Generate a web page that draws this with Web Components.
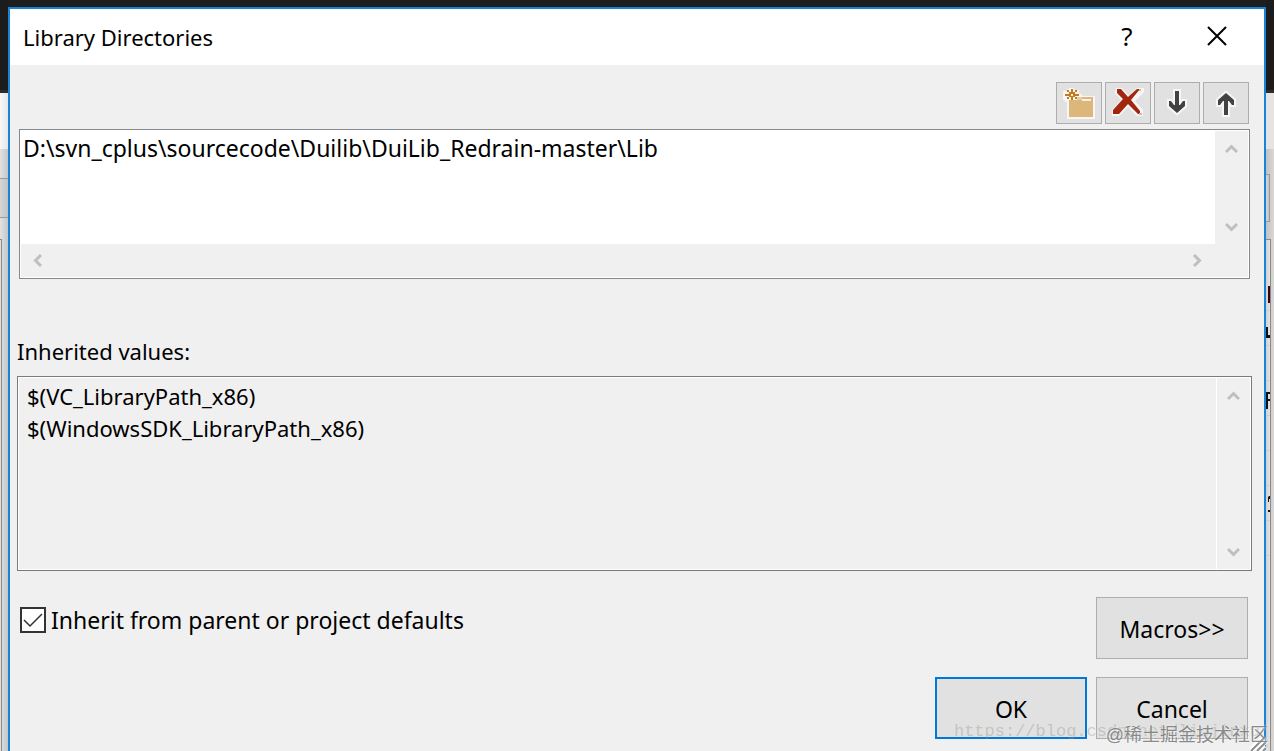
<!DOCTYPE html>
<html lang="en">
  <head>
    <meta charset="utf-8" />
    <title>Library Directories</title>
    <style>
      body {
        margin: 0;
        height: 100vh;
        overflow: hidden;
        background: #1e1e1e;
        color: #000;
        font: 22px/32px 'Noto Sans', 'Open Sans', sans-serif;
      }
    </style>
  </head>
  <body>
    <template id="desktopTemplate">
      <style>
        :host {
          display: grid;
          grid-template-columns: 8px 1fr 8px;
          height: 100vh;
          position: relative;
          overflow: hidden;
        }
        main {
          padding-top: 7px;
          min-width: 0;
        }
      </style>
      <page-edge side="left"></page-edge>
      <main><slot></slot></main>
      <page-edge side="right"></page-edge>
      <slot name="mark"></slot>
    </template>

    <template id="edgeTemplate">
      <style>
        :host {
          display: flex;
          flex-direction: column;
          overflow: hidden;
          background: linear-gradient(to right, #e2e2e2, #c6c6c6);
        }
        :host([side='right']) {
          background: linear-gradient(to left, #d8d8d8, #c2c2c2);
        }
        .dark {
          flex: 0 0 90px;
          background: #1c1c1c;
          border-bottom: 3px solid #2c2c2c;
        }
        .light {
          flex: 0 0 56px;
          background: linear-gradient(to right, #f8f8f8, #e6e6e6);
        }
        :host([side='right']) .light {
          background: #e4e4e4;
        }
        .field {
          flex: 0 0 38px;
          margin: 29px 0 21px;
          border: 1px solid #9a9a9a;
          border-left: 0;
          background: linear-gradient(to right, #d6d6d6, #c2c2c2);
        }
        :host([side='left']) .field {
          border-right: 0;
        }
        :host([side='right']) .field {
          margin: 25px 4px 17px 0;
          flex-basis: 46px;
        }
        .list {
          flex: 1;
          border-top: 1px solid #8a8a8a;
          border-right: 1px solid #8a8a8a;
          overflow: hidden;
        }
        :host([side='left']) .list {
          margin-right: 6px;
        }
        :host([side='right']) .list {
          margin-right: 3px;
          padding-top: 36px;
          background: linear-gradient(to right, #d0d0d0, #e4e4e4);
        }
        .list i {
          display: block;
          height: 34px;
          border-bottom: 1px solid #cdcdcd;
        }
        /* slivers of the property names under the dialog */
        svg {
          display: block;
          width: 4px;
          height: 34px;
        }
      </style>
      <div class="dark"></div>
      <div class="light"></div>
      <div class="field"></div>
      <div class="list"></div>
    </template>

    <template id="dialogTemplate">
      <style>
        :host {
          display: block;
          box-sizing: border-box;
          min-height: 100vh;
          border: 2px solid #1883d7;
          background: #f0f0f0;
        }
        header {
          display: flex;
          align-items: center;
          height: 56px;
          padding: 0 2px 0 13px;
          background: #fff;
        }
        h1 {
          flex: 1;
          margin: 0;
          font: inherit;
        }
        header button {
          width: 90px;
          height: 56px;
          padding: 0 0 2px;
          border: 0;
          background: none;
          font: inherit;
          font-size: 26px;
          color: #000;
        }
        svg {
          display: block;
          margin: auto;
        }
        .content {
          padding: 17px 12px 0 7px;
        }
      </style>
      <header>
        <h1><slot name="title"></slot></h1>
        <button type="button" aria-label="Help">?</button>
        <button type="button" aria-label="Close">
          <svg width="20" height="20" viewBox="0 0 20 20">
            <path d="M1 1L19 19M19 1L1 19" stroke="#000" stroke-width="2" />
          </svg>
        </button>
      </header>
      <div class="content"><slot></slot></div>
    </template>

    <template id="toolTemplate">
      <style>
        :host {
          display: block;
        }
        button {
          display: block;
          box-sizing: border-box;
          width: 46px;
          height: 42px;
          padding: 0;
          border: 1px solid #adadad;
          background: #e1e1e1;
        }
        svg {
          display: block;
          margin: -1px;
        }
      </style>
      <button type="button"></button>
    </template>

    <template id="boxTemplate">
      <style>
        :host {
          display: block;
        }
        label {
          display: block;
          margin-bottom: 9px;
        }
        .frame {
          display: grid;
          grid-template-columns: 1fr 33px;
          box-sizing: border-box;
          height: 195px;
          padding: 1px;
          border: 1px solid #7a7a7a;
          background: #f0f0f0;
          box-shadow: inset 0 0 0 1px #fff;
        }
        textarea {
          box-sizing: border-box;
          width: 100%;
          height: 100%;
          min-width: 0;
          margin: 0;
          padding: 2px 8px;
          border: 0;
          border-right: 1px solid #fff;
          outline: 0;
          resize: none;
          overflow: hidden;
          white-space: pre;
          background: none;
          font: inherit;
          color: inherit;
        }
        .bar {
          display: flex;
          flex-direction: column;
          justify-content: space-between;
          align-items: center;
          padding: 13px 0 12px;
        }
        .bar.across {
          display: none;
          flex-direction: row;
          padding: 0 13px 0 12px;
        }
        :host([editable]) .frame {
          grid-template-rows: 1fr 33px;
          height: 150px;
          border-color: #828790;
        }
        :host([editable]) textarea {
          padding: 1px 2px;
          border: 0;
          background: #fff;
          font-size: 23px;
        }
        :host([editable]) .bar.across {
          display: flex;
        }
        path {
          fill: none;
          stroke: #bfbfbf;
          stroke-width: 3;
        }
      </style>
      <label for="text"></label>
      <div class="frame">
        <textarea id="text" spellcheck="false"></textarea>
        <div class="bar">
          <svg width="13" height="10"><path d="M1 8L6.500 2.500L12 8" /></svg>
          <svg width="13" height="10"><path d="M1 2L6.500 7.500L12 2" /></svg>
        </div>
        <div class="bar across">
          <svg width="10" height="13"><path d="M8 1L2.500 6.500L8 12" /></svg>
          <svg width="10" height="13"><path d="M2 1L7.500 6.500L2 12" /></svg>
        </div>
      </div>
    </template>

    <template id="checkTemplate">
      <style>
        :host {
          display: block;
          font-size: 23px;
        }
        label {
          display: flex;
          align-items: center;
          gap: 5px;
        }
        input {
          appearance: none;
          flex: none;
          box-sizing: border-box;
          width: 26px;
          height: 26px;
          margin: 0;
          border: 2px solid #333;
          background: #fff;
        }
        .box {
          display: grid;
        }
        .box > * {
          grid-area: 1 / 1;
        }
        svg {
          pointer-events: none;
        }
        input:not(:checked) + svg {
          display: none;
        }
      </style>
      <label>
        <span class="box">
          <input type="checkbox" checked />
          <svg width="26" height="26">
            <path d="M4 13L10 19L22 7" fill="none" stroke="#333" stroke-width="1.500" />
          </svg>
        </span>
        <slot></slot>
      </label>
    </template>

    <template id="buttonTemplate">
      <style>
        :host {
          display: block;
          font-size: 23px;
        }
        button {
          display: block;
          box-sizing: border-box;
          width: 152px;
          height: 62px;
          padding: 2px 0 0;
          border: 1px solid #adadad;
          background: #e1e1e1;
          font: inherit;
          color: inherit;
        }
        :host([primary]) button {
          border: 2px solid #0078d7;
        }
      </style>
      <button type="button"><slot></slot></button>
    </template>

    <template id="editorTemplate">
      <style>
        :host {
          display: flex;
          flex-direction: column;
        }
        .tools {
          display: flex;
          justify-content: flex-end;
          gap: 3px;
          padding: 0 3px 5px 0;
        }
        .paths {
          margin: 0 2px 56px;
        }
        footer {
          display: flex;
          justify-content: space-between;
          align-items: flex-start;
          padding: 26px 4px 12px 3px;
        }
        check-option {
          padding-top: 7px;
        }
        .actions {
          display: grid;
          grid-template-columns: auto auto;
          justify-items: end;
          gap: 18px 9px;
        }
        .actions ::slotted([wide]) {
          grid-column: 1 / -1;
        }
      </style>
      <div class="tools"><slot name="tool"></slot></div>
      <div class="paths"><slot name="paths"></slot></div>
      <slot name="inherited"></slot>
      <footer>
        <check-option><slot name="option"></slot></check-option>
        <div class="actions"><slot name="action"></slot></div>
      </footer>
    </template>

    <template id="markTemplate">
      <style>
        :host {
          position: absolute;
          right: 6px;
          bottom: 0;
          display: grid;
          justify-items: end;
          align-items: end;
          pointer-events: none;
        }
        :host > * {
          grid-area: 1 / 1;
        }
        .link {
          padding-right: 8px;
          font: 17px/38px 'Liberation Mono', monospace;
          color: rgba(150, 150, 140, 0.4);
        }
        .site {
          font: 18px/32px 'Liberation Sans', 'Noto Sans CJK SC', sans-serif;
          color: rgba(100, 100, 100, 0.75);
          text-shadow: 0 0 2px #fff;
        }
        svg,
        .link,
        .site {
          grid-area: 1 / 1;
        }
      </style>
      <svg width="18" height="14">
        <path d="M0 14L14 0M6 14L16 4M12 14L16 10" stroke="#fff" stroke-width="5" />
        <path d="M1 14L15 0M7 14L16 5M13 14L16 11" stroke="#8c8c8c" stroke-width="2" />
      </svg>
      <span class="link"><slot name="link"></slot></span>
      <span class="site"><slot></slot></span>
    </template>

    <desktop-area>
      <dialog-window>
        <span slot="title">Library Directories</span>
        <directory-editor>
          <tool-button slot="tool" icon="folder" label="New line"></tool-button>
          <tool-button slot="tool" icon="remove" label="Delete"></tool-button>
          <tool-button slot="tool" icon="down" label="Move down"></tool-button>
          <tool-button slot="tool" icon="up" label="Move up"></tool-button>
          <value-box
            slot="paths"
            editable
            name="Directories"
            value="D:\svn_cplus\sourcecode\Duilib\DuiLib_Redrain-master\Lib"
          ></value-box>
          <value-box
            slot="inherited"
            label="Inherited values:"
            value="$(VC_LibraryPath_x86)&#10;$(WindowsSDK_LibraryPath_x86)"
          ></value-box>
          <span slot="option">Inherit from parent or project defaults</span>
          <push-button slot="action" wide>Macros&gt;&gt;</push-button>
          <push-button slot="action" primary>OK</push-button>
          <push-button slot="action">Cancel</push-button>
        </directory-editor>
      </dialog-window>
      <corner-mark slot="mark">
        <span slot="link">https://blog.csdn.net/liujinxu</span>
        @稀土掘金技术社区
      </corner-mark>
    </desktop-area>

    <script>
      const ARROW =
        'M21 9h4v14h1l3-4h2v5l-8 7l-8-7v-5h2l3 4h1z';

      const ICONS = {
        folder: `
          <path d="M13 6h5v2h5v4h3v2h13v23H11V20H9v-2H7V9h4V7h2z" fill="#f6f6f6"/>
          <path d="M13 18h10v-3h14v20H13z" fill="#dcb67a"/>
          <path d="M21 15h5v3h-5z" fill="#e6cda3"/>
          <path d="M26 17h9v2h-9z" fill="#f6f0e6"/>
          <path d="M15 7h2v3h-2zM15 15h2v3h-2zM9 12h4v2H9zM19 12h4v2h-4zM11 8h2v2h-2zM19 8h2v2h-2zM11 15h2v2h-2zM19 15h2v2h-2zM13 10h6v5h-6z" fill="#c27d1a"/>
          <path d="M15 12h2v2h-2z" fill="#f6f6f6"/>`,
        remove: `
          <path d="M11 6h6l7 8l8-8h7v4l-9 9l8 9v6h-6l-9-9l-9 9H7v-6l9-10l-6-7z" fill="#f6f6f6"/>
          <path d="M12 7h4l7 8l9-8h3l-9 11l9 11v3h-2l-10-10l-9 10H8v-4l10-11l-6-6z" fill="#a1260d"/>
          <path d="M34 7h2v2h-2zM34 31h3v2h-3z" fill="#dcb4aa"/>`,
        down: `
          <path d="${ARROW}" fill="#f6f6f6" stroke="#f6f6f6" stroke-width="4"/>
          <path d="${ARROW}" fill="#424242"/>`,
        up: `
          <g transform="matrix(1 0 0 -1 0 42)">
            <path d="${ARROW}" fill="#f6f6f6" stroke="#f6f6f6" stroke-width="4"/>
            <path d="${ARROW}" fill="#424242"/>
          </g>`,
      };

      class TemplateElement extends HTMLElement {
        constructor() {
          super();
          this.attachShadow({ mode: 'open' });
          this.shadowRoot.append(
            document
              .getElementById(this.constructor.template)
              .content.cloneNode(true)
          );
        }
      }

      class DesktopArea extends TemplateElement {
        static template = 'desktopTemplate';
      }

      class PageEdge extends TemplateElement {
        static template = 'edgeTemplate';

        connectedCallback() {
          if (this.getAttribute('side') !== 'right') return;

          const slivers = [
            '<path d="M2 10h2v17H2z" fill="#400008"/>',
            '<path d="M0 16h2v8h2v3H0z" fill="#111"/>',
            '',
            '<path d="M0 11h4v2H2v5h2v2H2v8H0z" fill="#111"/>',
            '',
            '',
            '<path d="M3 10h1v3H3v3H2v-5zM2 24h2v2H2z" fill="#221100"/>',
            '',
          ];
          this.shadowRoot.querySelector('.list').innerHTML = slivers
            .map((s) => `<i><svg>${s}</svg></i>`)
            .join('');
        }
      }

      class DialogWindow extends TemplateElement {
        static template = 'dialogTemplate';
      }

      class DirectoryEditor extends TemplateElement {
        static template = 'editorTemplate';
      }

      class ToolButton extends TemplateElement {
        static template = 'toolTemplate';

        connectedCallback() {
          const button = this.shadowRoot.querySelector('button');
          button.setAttribute('aria-label', this.getAttribute('label'));
          button.innerHTML = `<svg width="46" height="42">${
            ICONS[this.getAttribute('icon')]
          }</svg>`;
        }
      }

      class ValueBox extends TemplateElement {
        static template = 'boxTemplate';

        connectedCallback() {
          const text = this.shadowRoot.querySelector('textarea');
          const label = this.shadowRoot.querySelector('label');

          text.value = this.getAttribute('value');
          text.readOnly = !this.hasAttribute('editable');

          if (this.hasAttribute('label')) {
            label.textContent = this.getAttribute('label');
          } else {
            label.remove();
            text.setAttribute('aria-label', this.getAttribute('name'));
          }
        }
      }

      class CheckOption extends TemplateElement {
        static template = 'checkTemplate';
      }

      class PushButton extends TemplateElement {
        static template = 'buttonTemplate';
      }

      class CornerMark extends TemplateElement {
        static template = 'markTemplate';
      }

      customElements.define('page-edge', PageEdge);
      customElements.define('desktop-area', DesktopArea);
      customElements.define('dialog-window', DialogWindow);
      customElements.define('check-option', CheckOption);
      customElements.define('directory-editor', DirectoryEditor);
      customElements.define('tool-button', ToolButton);
      customElements.define('value-box', ValueBox);
      customElements.define('push-button', PushButton);
      customElements.define('corner-mark', CornerMark);
    </script>
  </body>
</html>
